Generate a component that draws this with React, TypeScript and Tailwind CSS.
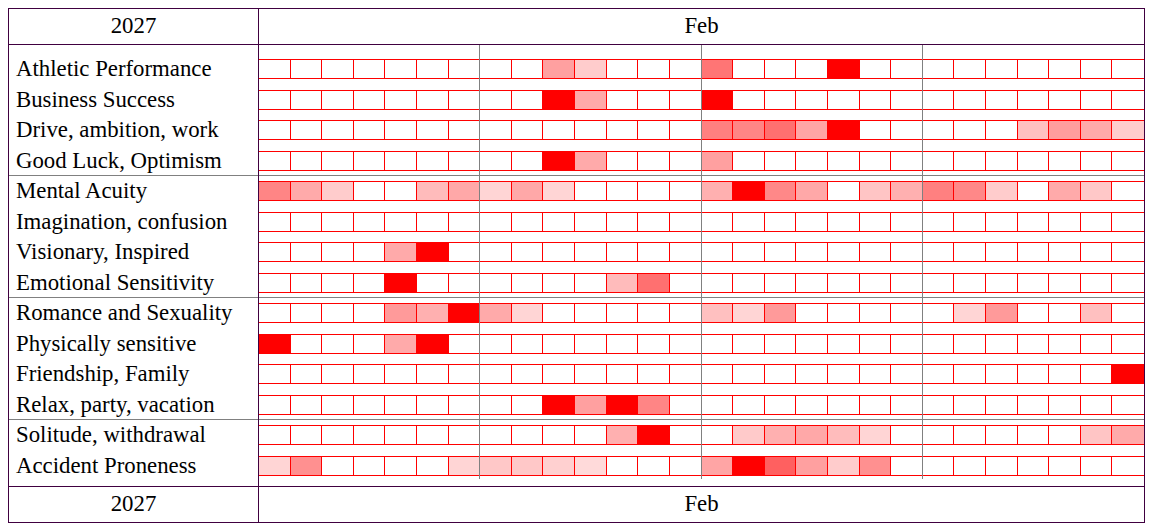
import clsx from "clsx";

type Row = { label: string; marks: Record<number, string> };

const serif = "font-['Liberation_Serif','Times_New_Roman',serif]";

const groups: Row[][] = [
  [
    { label: "Athletic Performance", marks: { 9: "bg-[#ffa0a0]", 10: "bg-[#ffcccc]", 14: "bg-[#ff7575]", 18: "bg-[#ff0000]" } },
    { label: "Business Success", marks: { 9: "bg-[#ff0000]", 10: "bg-[#ffaaaa]", 14: "bg-[#ff0000]" } },
    {
      label: "Drive, ambition, work",
      marks: {
        14: "bg-[#ff8080]", 15: "bg-[#ff8585]", 16: "bg-[#ff7070]", 17: "bg-[#ffa5a5]", 18: "bg-[#ff0000]",
        24: "bg-[#ffc0c0]", 25: "bg-[#ff9e9e]", 26: "bg-[#ffaaaa]", 27: "bg-[#ffcccc]",
      },
    },
    { label: "Good Luck, Optimism", marks: { 9: "bg-[#ff0000]", 10: "bg-[#ffaaaa]", 14: "bg-[#ffa0a0]" } },
  ],
  [
    {
      label: "Mental Acuity",
      marks: {
        0: "bg-[#ff8585]", 1: "bg-[#ffaaaa]", 2: "bg-[#ffcccc]", 5: "bg-[#ffbbbb]", 6: "bg-[#ffa8a8]",
        7: "bg-[#ffd5d5]", 8: "bg-[#ffa8a8]", 9: "bg-[#ffd5d5]", 14: "bg-[#ffb0b0]", 15: "bg-[#ff0000]",
        16: "bg-[#ff8888]", 17: "bg-[#ffa8a8]", 19: "bg-[#ffc5c5]", 20: "bg-[#ffb0b0]", 21: "bg-[#ff8080]",
        22: "bg-[#ff8888]", 23: "bg-[#ffcccc]", 25: "bg-[#ffaaaa]", 26: "bg-[#ffc8c8]",
      },
    },
    { label: "Imagination, confusion", marks: {} },
    { label: "Visionary, Inspired", marks: { 4: "bg-[#ffaaaa]", 5: "bg-[#ff0000]" } },
    { label: "Emotional Sensitivity", marks: { 4: "bg-[#ff0000]", 11: "bg-[#ffbbbb]", 12: "bg-[#ff7070]" } },
  ],
  [
    {
      label: "Romance and Sexuality",
      marks: {
        4: "bg-[#ff9a9a]", 5: "bg-[#ffb0b0]", 6: "bg-[#ff0000]", 7: "bg-[#ffaaaa]", 8: "bg-[#ffd5d5]",
        14: "bg-[#ffc0c0]", 15: "bg-[#ffd5d5]", 16: "bg-[#ff9a9a]", 22: "bg-[#ffd5d5]", 23: "bg-[#ff9a9a]",
        26: "bg-[#ffc0c0]",
      },
    },
    { label: "Physically sensitive", marks: { 0: "bg-[#ff0000]", 4: "bg-[#ffaaaa]", 5: "bg-[#ff0000]" } },
    { label: "Friendship, Family", marks: { 27: "bg-[#ff0000]" } },
    { label: "Relax, party, vacation", marks: { 9: "bg-[#ff0000]", 10: "bg-[#ffa0a0]", 11: "bg-[#ff0000]", 12: "bg-[#ff8585]" } },
  ],
  [
    {
      label: "Solitude, withdrawal",
      marks: {
        11: "bg-[#ffb0b0]", 12: "bg-[#ff0000]", 15: "bg-[#ffcaca]", 16: "bg-[#ffb0b0]", 17: "bg-[#ffa8a8]",
        18: "bg-[#ffbcbc]", 19: "bg-[#ffd5d5]", 26: "bg-[#ffc5c5]", 27: "bg-[#ffaaaa]",
      },
    },
    {
      label: "Accident Proneness",
      marks: {
        0: "bg-[#ffd5d5]", 1: "bg-[#ff9090]", 6: "bg-[#ffd5d5]", 7: "bg-[#ffc8c8]", 8: "bg-[#ffc8c8]",
        9: "bg-[#ffd0d0]", 10: "bg-[#ffdada]", 14: "bg-[#ffa5a5]", 15: "bg-[#ff0000]", 16: "bg-[#ff6060]",
        17: "bg-[#ffa0a0]", 18: "bg-[#ffcccc]", 19: "bg-[#ff9090]",
      },
    },
  ],
];

function Gap({ sep }: { sep: boolean }) {
  return (
    <div className="h-[10.5px] pt-[4.5px]">
      {sep && <div className="h-px bg-[#808080]" />}
    </div>
  );
}

function Cells({ marks }: { marks: Record<number, string> }) {
  return (
    <div className="grid h-5 grid-cols-[repeat(28,minmax(0,1fr))] border-y border-[#ff0000]">
      {Array.from({ length: 28 }, (_, i) => (
        <div key={i} className={clsx(i < 27 && "border-r border-[#ff0000]", marks[i] ?? "bg-white")} />
      ))}
    </div>
  );
}

function YearRow() {
  return (
    <div className="flex h-[35px] text-[22.8px] leading-none">
      <div className="flex w-[250px] shrink-0 items-center justify-center border-r border-[#400040]">2027</div>
      <div className="flex flex-1 items-center justify-center">Feb</div>
    </div>
  );
}

export default function App() {
  return (
    <div className={clsx("min-h-screen bg-white p-2 text-black", serif)}>
      <div className="w-[1137px] border border-[#400040]">
        <YearRow />
        <div className="flex border-y border-[#400040]">
          <div className="w-[250px] shrink-0 border-r border-[#400040] pt-[14px]">
            {groups.map((g, gi) =>
              g.map((r, ri) => (
                <div key={r.label}>
                  <div className="flex h-5 items-center whitespace-nowrap pl-[7px] pt-px text-[22.8px] leading-none">
                    {r.label}
                  </div>
                  <Gap sep={ri === g.length - 1 && gi < groups.length - 1} />
                </div>
              ))
            )}
          </div>
          <div className="relative flex-1 pt-[14px]">
            {groups.map((g, gi) =>
              g.map((r, ri) => (
                <div key={r.label}>
                  <Cells marks={r.marks} />
                  <Gap sep={ri === g.length - 1 && gi < groups.length - 1} />
                </div>
              ))
            )}
            <div className="absolute bottom-[7px] left-[calc(25%-1px)] top-0 w-px bg-[#808080]" />
            <div className="absolute bottom-[7px] left-[calc(50%-1px)] top-0 w-px bg-[#808080]" />
            <div className="absolute bottom-[7px] left-[calc(75%-1px)] top-0 w-px bg-[#808080]" />
          </div>
        </div>
        <YearRow />
      </div>
    </div>
  );
}
